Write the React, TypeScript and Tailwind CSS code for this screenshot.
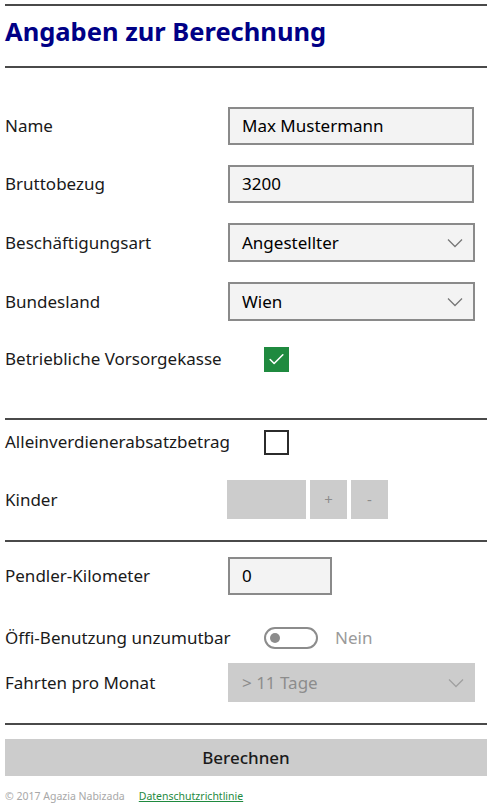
import { Check } from 'lucide-react'

const labelCls = 'w-[223px] shrink-0 text-[17px] text-[#1a1a1a]'
const wideLabelCls = 'w-[259px] shrink-0 text-[17px] text-[#1a1a1a]'

function Divider({ className = '' }: { className?: string }) {
  return <div className={`h-[2px] bg-[#4a4a4a] ${className}`} />
}

function Chevron({ color = '#666' }: { color?: string }) {
  return (
    <svg width="16" height="10" viewBox="0 0 16 10" fill="none" className="shrink-0">
      <path d="M1 1.5 L8 8.5 L15 1.5" stroke={color} strokeWidth="1.3" />
    </svg>
  )
}

function TextBox({ value, width = 'w-[246px]' }: { value: string; width?: string }) {
  return (
    <div className={`${width} h-[38px] border-2 border-[#8a8a8a] bg-[#f3f3f3] flex items-center pl-[12px] text-[17px] text-black`}>
      {value}
    </div>
  )
}

function Select({ value, disabled = false }: { value: string; disabled?: boolean }) {
  return (
    <div
      className={`w-[247px] h-[39px] flex items-center justify-between text-[17px] ${
        disabled ? 'bg-[#cccccc] text-[#8c8c8c] pl-[14px] pr-[11px]' : 'border-2 border-[#8a8a8a] bg-[#f3f3f3] text-black pl-[12px] pr-[10px]'
      }`}
    >
      <span>{value}</span>
      <Chevron color={disabled ? '#a0a0a0' : '#777'} />
    </div>
  )
}

export default function App() {
  return (
    <div className="w-[493px] h-[810px] bg-white px-[5px] pt-[4px] font-['Noto_Sans',sans-serif] overflow-hidden">
      <Divider className="w-[482px]" />

      {/* Title */}
      <h1 className="mt-[8px] text-[25.5px] leading-[34px] font-bold text-[#000086]">
        Angaben zur Berechnung
      </h1>
      <Divider className="mt-[18px] w-[482px]" />

      {/* Main fields */}
      <div className="mt-[39px] flex items-center">
        <span className={labelCls}>Name</span>
        <TextBox value="Max Mustermann" />
      </div>
      <div className="mt-[20px] flex items-center">
        <span className={labelCls}>Bruttobezug</span>
        <TextBox value="3200" />
      </div>
      <div className="mt-[20px] flex items-center">
        <span className={labelCls}>Beschäftigungsart</span>
        <Select value="Angestellter" />
      </div>
      <div className="mt-[20px] flex items-center">
        <span className={labelCls}>Bundesland</span>
        <Select value="Wien" />
      </div>
      <div className="mt-[26px] flex items-center h-[24px]">
        <span className={wideLabelCls}>Betriebliche Vorsorgekasse</span>
        <div className="w-[25px] h-[25px] bg-[#1f8a3f] flex items-center justify-center">
          <Check className="w-[19px] h-[19px] text-white" strokeWidth={2} />
        </div>
      </div>

      <Divider className="mt-[47px] w-[482px]" />

      <div className="mt-[10px] flex items-center h-[24px]">
        <span className={wideLabelCls}>Alleinverdienerabsatzbetrag</span>
        <div className="w-[25px] h-[25px] border-2 border-[#2b2b2b] bg-white" />
      </div>
      <div className="mt-[26px] flex items-center">
        <span className="w-[222px] shrink-0 text-[17px] text-[#1a1a1a]">Kinder</span>
        <div className="flex gap-[4px]">
          <div className="w-[79px] h-[39px] bg-[#cccccc]" />
          <div className="w-[37px] h-[39px] bg-[#cccccc] flex items-center justify-center text-[15px] text-[#8c8c8c]">+</div>
          <div className="w-[37px] h-[39px] bg-[#cccccc] flex items-center justify-center text-[15px] text-[#8c8c8c]">-</div>
        </div>
      </div>

      <Divider className="mt-[21px] w-[482px]" />

      <div className="mt-[15px] flex items-center">
        <span className={labelCls}>Pendler-Kilometer</span>
        <TextBox value="0" width="w-[104px]" />
      </div>
      <div className="mt-[32px] flex items-center h-[22px]">
        <span className={wideLabelCls}>Öffi-Benutzung unzumutbar</span>
        <div className="w-[54px] h-[22px] rounded-full border-2 border-[#8c8c8c] flex items-center pl-[4px]">
          <div className="w-[10px] h-[10px] rounded-full bg-[#8c8c8c]" />
        </div>
        <span className="ml-[17px] text-[17px] text-[#9a9a9a]">Nein</span>
      </div>
      <div className="mt-[14px] flex items-center">
        <span className={labelCls}>Fahrten pro Monat</span>
        <Select value="> 11 Tage" disabled />
      </div>

      <Divider className="mt-[21px] w-[482px]" />

      <button className="mt-[14px] w-[482px] h-[37px] bg-[#cccccc] text-[17px] font-medium text-[#1a1a1a] flex items-center justify-center">
        Berechnen
      </button>

      {/* Footer */}
      <div className="mt-[13px] flex items-center text-[10.5px] leading-[14px]">
        <span className="text-[#a8a8a8]">© 2017 Agazia Nabizada</span>
        <a className="ml-[14px] text-[#1f8a3f] underline">Datenschutzrichtlinie</a>
      </div>
    </div>
  )
}
